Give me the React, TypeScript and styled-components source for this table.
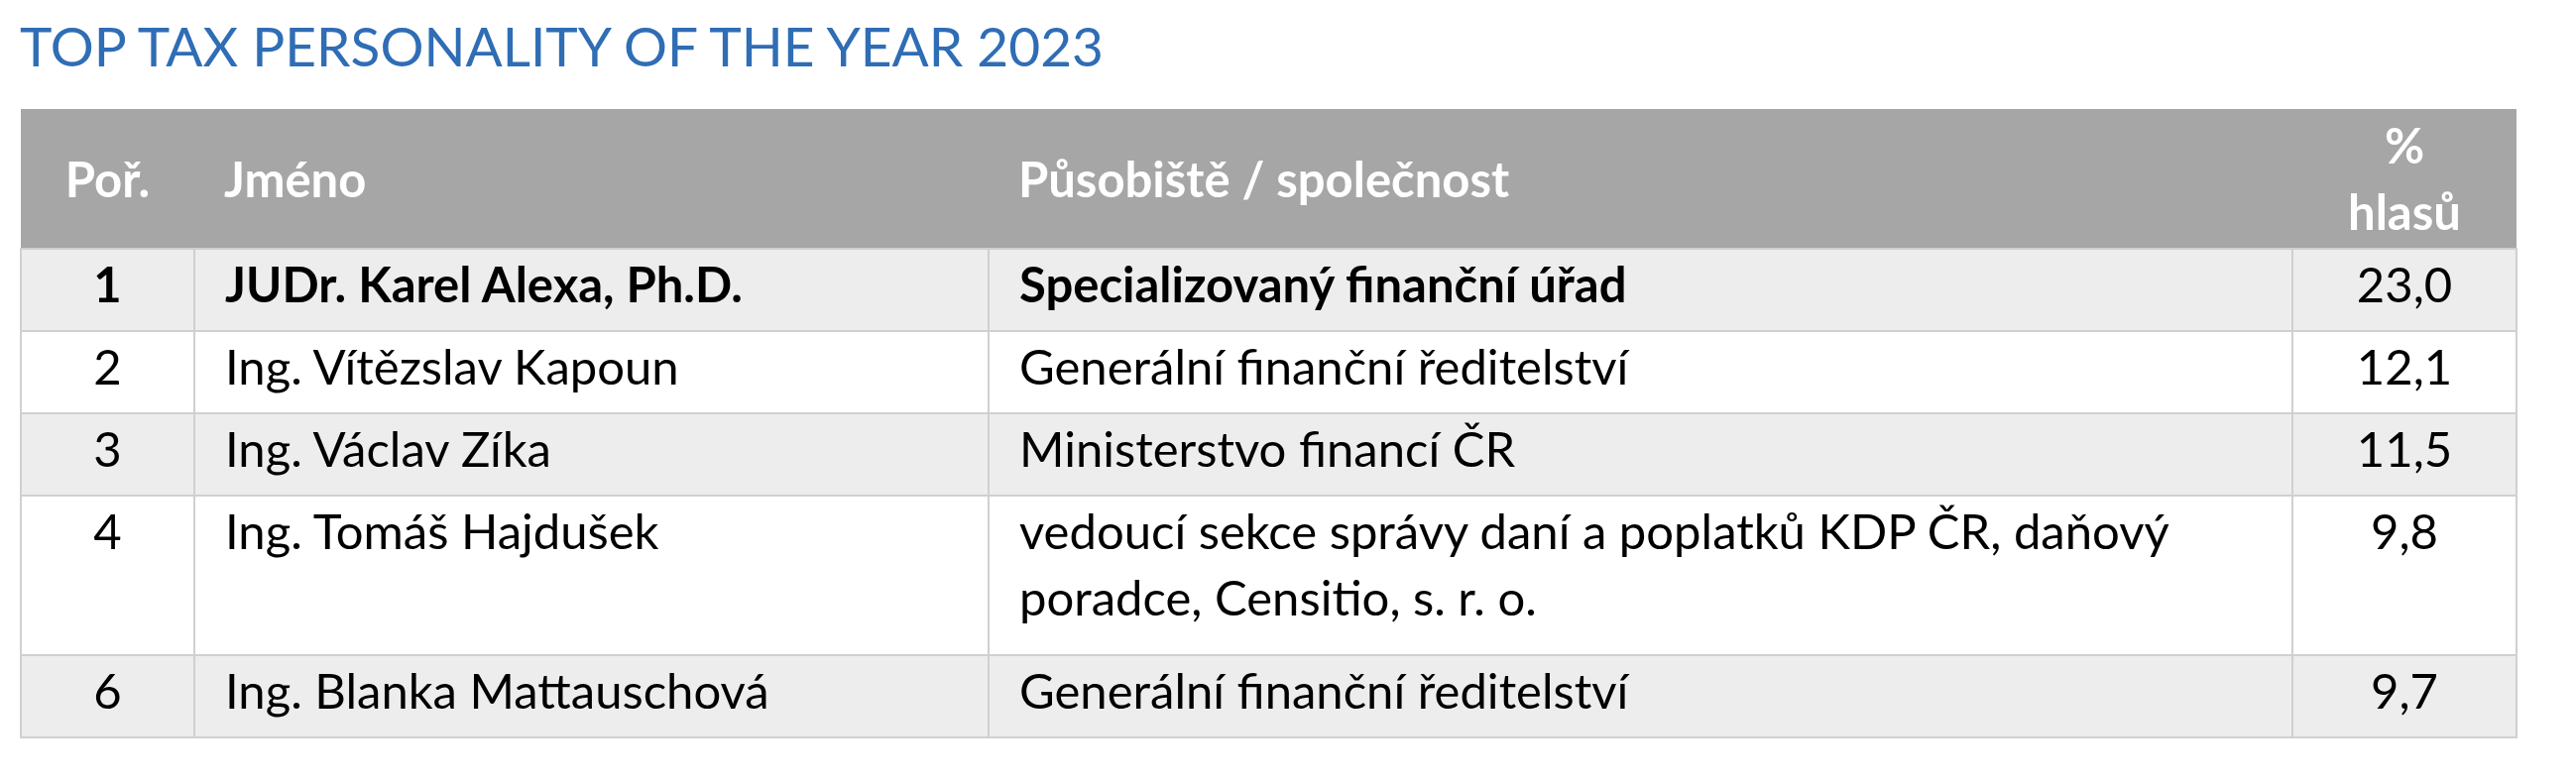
import React from 'react';
import styled, { createGlobalStyle } from 'styled-components';

type Row = {
  rank: string;
  name: string;
  place: string;
  share: string;
  bold?: boolean;
  tall?: boolean;
};

const rows: Row[] = [
  { rank: '1', name: 'JUDr. Karel Alexa, Ph.D.', place: 'Specializovaný finanční úřad', share: '23,0', bold: true },
  { rank: '2', name: 'Ing. Vítězslav Kapoun', place: 'Generální finanční ředitelství', share: '12,1' },
  { rank: '3', name: 'Ing. Václav Zíka', place: 'Ministerstvo financí ČR', share: '11,5' },
  {
    rank: '4',
    name: 'Ing. Tomáš Hajdušek',
    place: 'vedoucí sekce správy daní a poplatků KDP ČR, daňový poradce, Censitio, s. r. o.',
    share: '9,8',
    tall: true,
  },
  { rank: '6', name: 'Ing. Blanka Mattauschová', place: 'Generální finanční ředitelství', share: '9,7' },
];

const GlobalStyle = createGlobalStyle`
  html, body {
    margin: 0;
    padding: 0;
    background: #ffffff;
  }
  body {
    font-family: Lato, "Open Sans", sans-serif;
    color: #000000;
  }
`;

const Page = styled.div`
  padding: 13px 61px 0 20px;
`;

const Title = styled.h1`
  margin: 0 0 31px;
  font-size: 55px;
  font-weight: 400;
  line-height: 1.2;
  color: #2f6db5;
`;

const Table = styled.table`
  width: 2517px;
  border-collapse: collapse;
  table-layout: fixed;
  font-size: 49px;
  line-height: 67px;
`;

const HeadRow = styled.tr`
  height: 141px;
  background: #a6a6a6;
`;

const HeadCell = styled.th<{ $align?: 'left' | 'center' }>`
  padding: 0 0 0 ${p => (p.$align === 'center' ? '0' : '30px')};
  text-align: ${p => p.$align ?? 'left'};
  vertical-align: middle;
  font-weight: 700;
  color: #ffffff;
`;

const BodyRow = styled.tr<{ $shade: boolean; $tall?: boolean }>`
  height: ${p => (p.$tall ? '161px' : '83px')};
  background: ${p => (p.$shade ? '#ededed' : '#ffffff')};
`;

const Cell = styled.td<{ $align?: 'left' | 'center'; $bold?: boolean }>`
  padding: 1px ${p => (p.$align === 'center' ? '0' : '12px')} 0 ${p => (p.$align === 'center' ? '0' : '30px')};
  border: 2px solid #d0d0d0;
  text-align: ${p => p.$align ?? 'left'};
  vertical-align: top;
  font-weight: ${p => (p.$bold ? 700 : 400)};
`;

export default function App() {
  return (
    <Page>
      <GlobalStyle />
      <Title>TOP TAX PERSONALITY OF THE YEAR 2023</Title>
      <Table>
        <colgroup>
          <col style={{ width: 175 }} />
          <col style={{ width: 801 }} />
          <col style={{ width: 1315 }} />
          <col style={{ width: 226 }} />
        </colgroup>
        <thead>
          <HeadRow>
            <HeadCell $align="center">Poř.</HeadCell>
            <HeadCell>Jméno</HeadCell>
            <HeadCell>Působiště / společnost</HeadCell>
            <HeadCell $align="center">
              %
              <br />
              hlasů
            </HeadCell>
          </HeadRow>
        </thead>
        <tbody>
          {rows.map((r, i) => (
            <BodyRow key={r.rank} $shade={i % 2 === 0} $tall={r.tall}>
              <Cell $align="center" $bold={r.bold}>
                {r.rank}
              </Cell>
              <Cell $bold={r.bold}>{r.name}</Cell>
              <Cell $bold={r.bold}>{r.place}</Cell>
              <Cell $align="center">{r.share}</Cell>
            </BodyRow>
          ))}
        </tbody>
      </Table>
    </Page>
  );
}
